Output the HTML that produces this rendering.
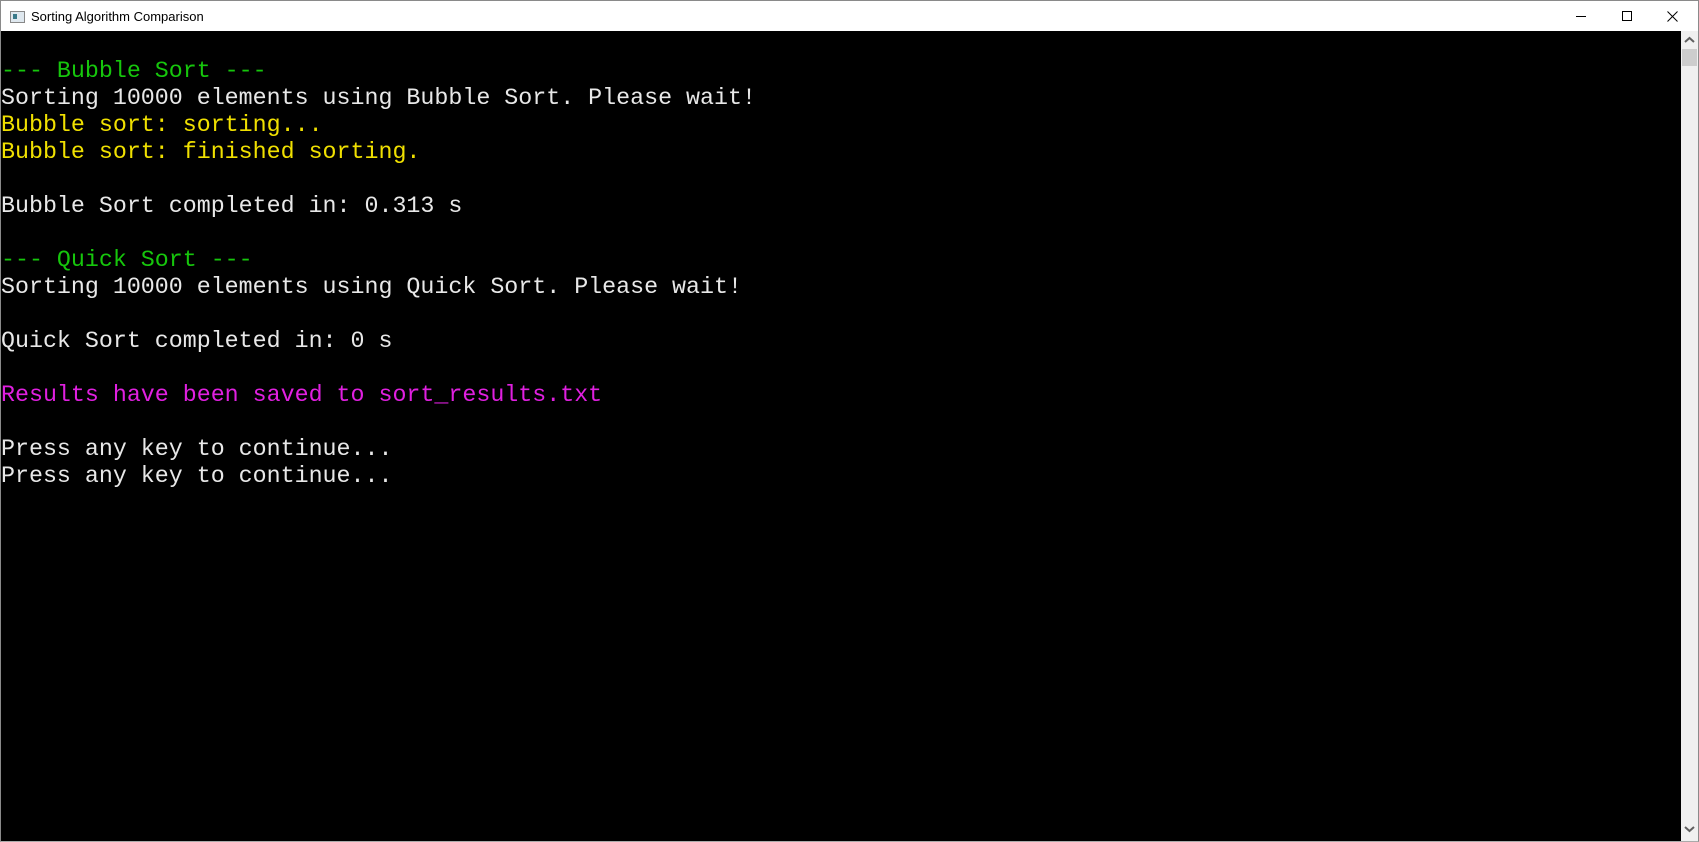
<!DOCTYPE html>
<html><head><style>
html,body{margin:0;padding:0;width:1699px;height:842px;overflow:hidden;background:#fff;}
.win{position:absolute;left:0;top:0;width:1697px;height:840px;border:1px solid #8a8a8a;border-bottom:1px solid #aaa;}
.title{position:absolute;left:0;top:0;width:1697px;height:30px;background:#fff;font-family:"Liberation Sans",sans-serif;font-size:13px;color:#000;}
.title .t{position:absolute;left:30px;top:8px;}
.icon{position:absolute;left:9px;top:10px;width:13px;height:10px;border:1px solid #888;background:#dfe8ef;}
.icon:before{content:"";position:absolute;left:2px;top:2px;width:4px;height:5px;background:#3a7a8a;}
.ctl{position:absolute;top:0;width:46px;height:30px;}
.con{position:absolute;left:0;top:30px;width:1680px;height:810px;background:#000;font-family:"Liberation Mono","Courier New",monospace;font-size:23.3px;line-height:27px;color:#e8e8e8;white-space:pre;}
.g{color:#16c60c}.y{color:#f0e000}.m{color:#e020e0}
.sb{position:absolute;left:1680px;top:30px;width:17px;height:810px;background:#f0f0f0;}
.thumb{position:absolute;left:1px;top:18px;width:15px;height:17px;background:#cdcdcd;}
</style></head><body>
<div class="win">
<div class="title"><div class="icon"></div><span class="t">Sorting Algorithm Comparison</span>
<svg class="ctl" style="left:1557px" viewBox="0 0 46 30"><line x1="18" y1="15.5" x2="28" y2="15.5" stroke="#000"/></svg>
<svg class="ctl" style="left:1603px" viewBox="0 0 46 30"><rect x="18.5" y="10.5" width="9" height="9" fill="none" stroke="#000"/></svg>
<svg class="ctl" style="left:1649px" viewBox="0 0 46 30"><path d="M17.5 10.5L27.5 20.5M27.5 10.5L17.5 20.5" stroke="#000"/></svg>
</div>
<div class="con">
<span class="g">--- Bubble Sort ---</span>
Sorting 10000 elements using Bubble Sort. Please wait!
<span class="y">Bubble sort: sorting...</span>
<span class="y">Bubble sort: finished sorting.</span>

Bubble Sort completed in: 0.313 s

<span class="g">--- Quick Sort ---</span>
Sorting 10000 elements using Quick Sort. Please wait!

Quick Sort completed in: 0 s

<span class="m">Results have been saved to sort_results.txt</span>

Press any key to continue...
Press any key to continue...
</div>
<div class="sb"><svg style="position:absolute;left:3px;top:5px" width="11" height="8" viewBox="0 0 11 8"><path d="M1 6L5.5 2L10 6" fill="none" stroke="#606060" stroke-width="2"/></svg><div class="thumb"></div>
<svg style="position:absolute;left:3px;top:794px" width="11" height="8" viewBox="0 0 11 8"><path d="M1 2L5.5 6L10 2" fill="none" stroke="#606060" stroke-width="2"/></svg></div>
</div>
</body></html>
